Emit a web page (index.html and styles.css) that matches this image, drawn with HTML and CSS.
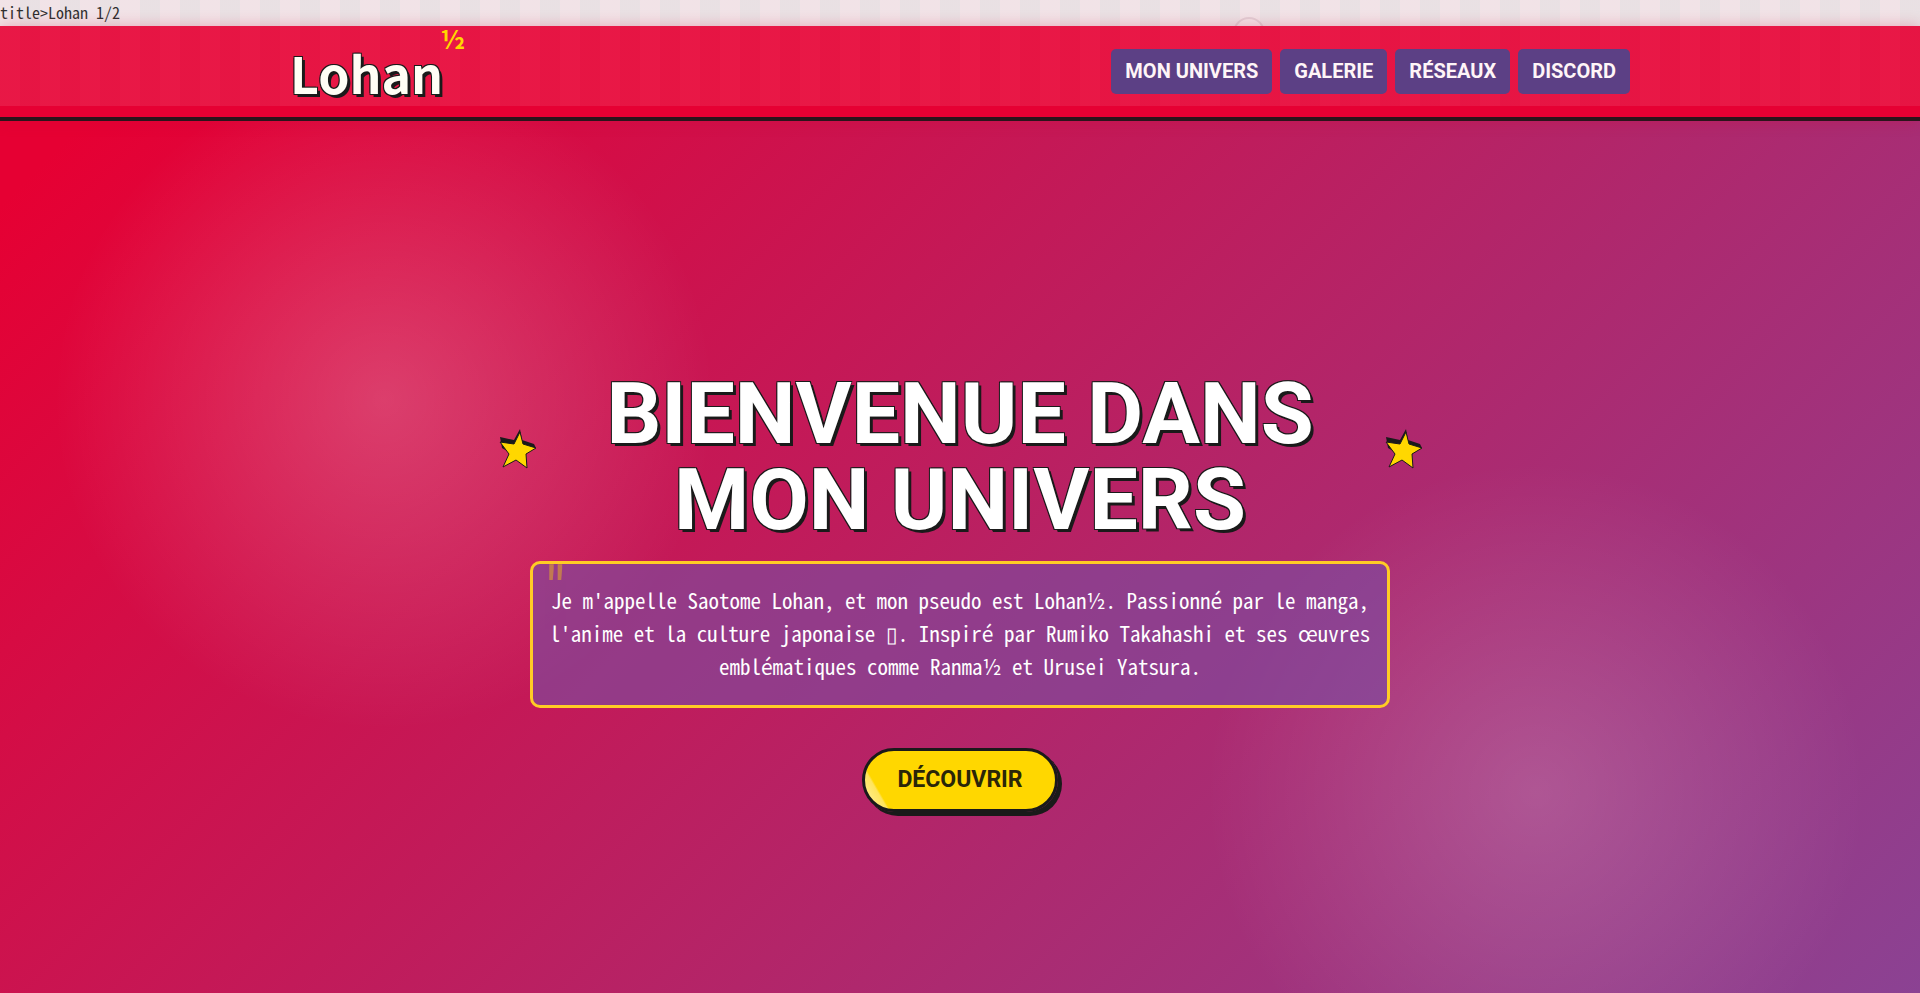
FILE: index.html
```html
<!DOCTYPE html>
<html lang="fr">
<head>
  <meta charset="UTF-8">
  <meta name="viewport" content="width=device-width, initial-scale=1.0">
  <title>Lohan 1/2</title>
  <link rel="stylesheet" href="styles.css">
</head>
<body>

  <div class="top-line">title&gt;Lohan 1/2</div>

  <!-- Header -->
  <header class="header">
    <div class="header-content">
      <a href="#accueil" class="logo">Lohan<span class="logo-half">½</span></a>
      <nav class="nav">
        <a href="#univers">MON UNIVERS</a>
        <a href="#galerie">GALERIE</a>
        <a href="#reseaux">RÉSEAUX</a>
        <a href="#discord">DISCORD</a>
      </nav>
    </div>
  </header>

  <!-- Hero -->
  <main class="hero" id="accueil">
    <div class="hero-content">
      <div class="hero-heading">
        <svg class="star" viewBox="0 0 40 42" aria-hidden="true">
          <path class="star-shadow" d="M23 1 25 12 37 16 39 20 24 23 17 27 5 20 3 9 17 12Z"/>
          <path class="star-body" d="M23 4 26 16 39 20 29 26 30 40 19 32 6 39 12 26 3 14 17 16Z"/>
        </svg>
        <h1>BIENVENUE DANS MON UNIVERS</h1>
        <svg class="star" viewBox="0 0 40 42" aria-hidden="true">
          <path class="star-shadow" d="M23 1 25 12 37 16 39 20 24 23 17 27 5 20 3 9 17 12Z"/>
          <path class="star-body" d="M23 4 26 16 39 20 29 26 30 40 19 32 6 39 12 26 3 14 17 16Z"/>
        </svg>
      </div>
      <p class="intro">Je m'appelle Saotome Lohan, et mon pseudo est Lohan½. Passionné par le manga, l'anime et la culture japonaise ▯. Inspiré par Rumiko Takahashi et ses œuvres emblématiques comme Ranma½ et Urusei Yatsura.</p>
      <button type="button" class="btn-discover">DÉCOUVRIR</button>
    </div>
  </main>

</body>
</html>
```

FILE: styles.css
```css
:root {
  --red: #e60033;
  --purple: #5c4085;
  --yellow: #ffd700;
  --black: #1a1a1a;
  --text-font: "Noto Sans CJK JP", sans-serif;
  --title-font: Roboto, sans-serif;
}

* {
  margin: 0;
  padding: 0;
  box-sizing: border-box;
}

body {
  position: relative;
  display: flex;
  flex-direction: column;
  min-height: 100vh;
  background-color: #ece1e5;
  color: var(--black);
  font-family: var(--text-font);
  font-feature-settings: "hwid";
}

/* Striped veil over the top of the page */
body::before {
  content: "";
  position: absolute;
  top: 0;
  left: 0;
  right: 0;
  height: 106px;
  background: repeating-linear-gradient(90deg, rgba(255, 235, 240, 0.1) 0 20px, rgba(235, 232, 235, 0.09) 20px 40px);
  pointer-events: none;
  z-index: 2;
}

.top-line {
  position: relative;
  height: 26px;
  overflow: hidden;
  background: repeating-linear-gradient(90deg, #f0e2e6 0 20px, #e9e0e3 20px 40px);
  font-size: 16px;
  line-height: 24px;
}

/* Faint bubble rising behind the header */
.top-line::after {
  content: "";
  position: absolute;
  top: 17px;
  left: 64%;
  width: 28px;
  height: 28px;
  margin-left: 4px;
  border: 2px solid rgba(150, 110, 125, 0.2);
  border-radius: 50%;
}

.header {
  position: relative;
  background-color: var(--red);
  border-bottom: 4px solid #2b141b;
  box-shadow: 0 0 14px rgba(200, 0, 51, 0.3);
}

.header-content {
  position: relative;
  display: flex;
  justify-content: space-between;
  align-items: center;
  max-width: 1340px;
  height: 91px;
  margin: 0 auto;
  z-index: 3;
}

.logo {
  position: relative;
  color: #fffef5;
  font-size: 50px;
  font-weight: 700;
  font-feature-settings: normal;
  line-height: 60px;
  text-decoration: none;
  text-shadow: -1px -1px 0 var(--black), 1px -1px 0 var(--black), -1px 1px 0 var(--black), 3px 3px 0 var(--black);
}

.logo-half {
  position: absolute;
  top: -19px;
  right: -22px;
  color: var(--yellow);
  font-size: 26px;
  line-height: 30px;
  text-shadow: none;
}

.nav {
  display: flex;
  gap: 8px;
}

.nav a {
  padding: 0 14px;
  border-radius: 5px;
  background-color: var(--purple);
  color: #fff5f7;
  font-family: var(--title-font);
  font-size: 20px;
  font-weight: 700;
  line-height: 45px;
  text-decoration: none;
}

.hero {
  flex: 1;
  display: flex;
  justify-content: center;
  align-items: center;
  padding: 68px 20px 0;
  background:
    radial-gradient(circle at 20% 32%, rgba(255, 255, 255, 0.2), transparent 330px),
    radial-gradient(circle at 80% 77%, rgba(255, 255, 255, 0.17), transparent 330px),
    linear-gradient(135deg, #e60033 3%, #8b4293 100%);
}

.hero-content {
  display: flex;
  flex-direction: column;
  align-items: center;
  width: 926px;
}

.hero-heading {
  display: flex;
  justify-content: space-between;
  align-items: center;
  width: 100%;
  margin-bottom: 18px;
}

.star {
  flex: none;
  width: 40px;
  height: 42px;
  margin-bottom: 16px;
}

.star-shadow {
  fill: var(--black);
}

.star-body {
  fill: var(--yellow);
  stroke: var(--black);
  stroke-width: 1;
}

h1 {
  width: 760px;
  color: #fff;
  font-family: var(--title-font);
  font-size: 86px;
  font-weight: 700;
  line-height: 86px;
  text-align: center;
  text-shadow: -1px -1px 0 var(--black), 1px -1px 0 var(--black), -1px 1px 0 var(--black), 3px 3px 0 var(--black);
}

.intro {
  position: relative;
  width: 860px;
  margin-bottom: 40px;
  padding: 20px 16px 22px;
  border: 3px solid #ffcc25;
  border-radius: 10px;
  background-color: rgba(125, 76, 160, 0.65);
  color: #fff;
  font-size: 21px;
  line-height: 33px;
  text-align: center;
  overflow: hidden;
}

.intro::before {
  content: '"';
  position: absolute;
  top: -4px;
  left: 12px;
  color: var(--yellow);
  font-family: var(--title-font);
  font-size: 64px;
  line-height: 64px;
  opacity: 0.4;
}

.btn-discover {
  height: 64px;
  padding: 0 32px;
  border: 3px solid var(--black);
  border-radius: 32px;
  background: linear-gradient(60deg, #ffe97a 6%, #ffe45c 10%, var(--yellow) 11%);
  box-shadow: 4px 4px 0 var(--black);
  color: #2a2608;
  font-family: var(--title-font);
  font-size: 23px;
  font-weight: 700;
  cursor: pointer;
}
```
